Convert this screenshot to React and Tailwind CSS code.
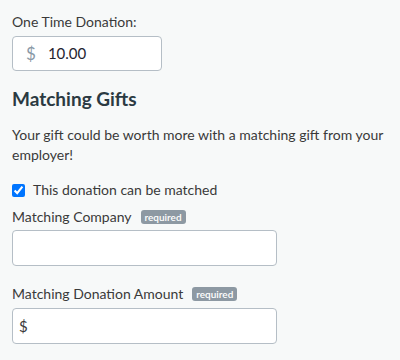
export default function App() {
  return (
    <div className="min-h-[360px] w-[400px] bg-[#f7f9f9] px-3 pt-3 text-[#2c3e50]" style={{ fontFamily: 'Lato, "Open Sans", sans-serif' }}>
      <div className="text-[14px] leading-[20px] text-[#3a3a3a]">One Time Donation:</div>
      <div className="mt-[4px] flex h-[35px] w-[150px] items-center rounded-[4px] border border-[#b5bec6] bg-white">
        <span className="pl-[13px] text-[17px] text-[#8a99a6]">$</span>
        <span className="pl-[12px] text-[15px] text-[#1f2430]">10.00</span>
      </div>
      <h2 className="mt-[16px] text-[19px] font-bold leading-[24px] text-[#2b3a42]">Matching Gifts</h2>
      <p className="mt-[14px] text-[14px] leading-[20px] text-[#3a3a3a]">
        Your gift could be worth more with a matching gift from your employer!
      </p>
      <label className="mt-[15px] flex items-center gap-[8px] text-[14px] leading-[20px] text-[#3a3a3a]">
        <input type="checkbox" defaultChecked className="h-[13px] w-[13px] accent-[#0075ff]" />
        This donation can be matched
      </label>
      <div className="mt-[7px] flex items-center gap-[9px] text-[14px] leading-[20px] text-[#3a3a3a]">
        Matching Company
        <span className="rounded-[3px] bg-[#8d99a3] px-[4px] text-[10px] font-semibold leading-[14px] text-white">required</span>
      </div>
      <div className="mt-[3px] h-[36px] w-[265px] rounded-[4px] border border-[#b5bec6] bg-white"></div>
      <div className="mt-[18px] flex items-center gap-[9px] text-[14px] leading-[20px] text-[#3a3a3a]">
        Matching Donation Amount
        <span className="rounded-[3px] bg-[#8d99a3] px-[4px] text-[10px] font-semibold leading-[14px] text-white">required</span>
      </div>
      <div className="mt-[4px] flex h-[36px] w-[265px] items-center rounded-[4px] border border-[#b5bec6] bg-white pl-[6px] text-[15px] text-[#3a3a3a]">$</div>
    </div>
  );
}
